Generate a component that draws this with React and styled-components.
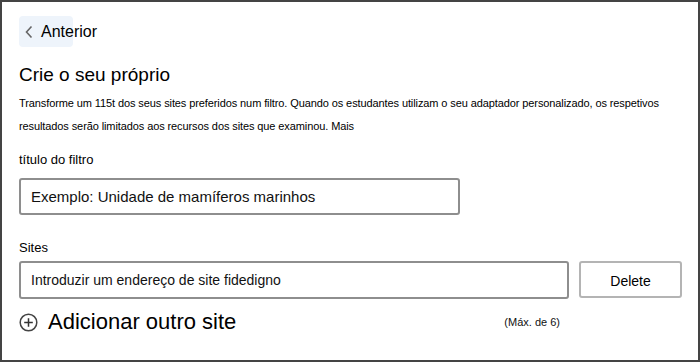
import React from 'react';
import styled, { createGlobalStyle } from 'styled-components';

const Global = createGlobalStyle`
  html, body {
    margin: 0;
    padding: 0;
    background: #fff;
  }
  * {
    box-sizing: border-box;
  }
`;

const Frame = styled.div`
  width: 700px;
  height: 362px;
  border: 2px solid #444;
  padding: 14px 0 0 17px;
  font-family: "Liberation Sans", Arial, sans-serif;
  color: #000;
  overflow: hidden;
`;

const BackButton = styled.button`
  display: flex;
  align-items: center;
  gap: 7px;
  width: 54px;
  height: 31px;
  padding: 0 0 0 5px;
  border: none;
  border-radius: 4px;
  background: #eef4fb;
  font-family: inherit;
  font-size: 16px;
  color: #000;
  white-space: nowrap;
  overflow: visible;
  cursor: pointer;

  svg {
    flex-shrink: 0;
  }
`;

const Heading = styled.h2`
  margin: 16px 0 0 0;
  font-size: 19px;
  font-weight: 400;
  line-height: 24px;
`;

const Description = styled.p`
  margin: 5px 0 0 0;
  font-family: "Liberation Sans Narrow", "Arial Narrow", "Liberation Sans", sans-serif;
  font-size: 11px;
  line-height: 23px;
  letter-spacing: -0.1px;
  width: 665px;
`;

const Label = styled.div`
  margin-top: ${p => p.$top}px;
  font-size: 13px;
  line-height: 16px;
`;

const Row = styled.div`
  display: flex;
  gap: 10px;
  margin-top: ${p => p.$top}px;
`;

const TextBox = styled.div`
  flex-shrink: 0;
  width: ${p => p.$width}px;
  height: ${p => p.$height}px;
  border: 2px solid #8e8e8e;
  border-radius: 3px;
  display: flex;
  align-items: center;
  padding-left: ${p => p.$pad}px;
  font-size: ${p => p.$size}px;
  color: #111;
`;

const DeleteButton = styled.button`
  flex-shrink: 0;
  width: 103px;
  height: 37px;
  border: 2px solid #b4b4b4;
  border-radius: 3px;
  background: #fff;
  font-family: inherit;
  font-size: 14px;
  color: #000;
  padding-top: 4px;
`;

const AddRow = styled.div`
  display: flex;
  align-items: center;
  margin-top: 10px;
  width: 541px;
`;

const AddText = styled.span`
  margin-left: 10px;
  font-size: 22px;
  line-height: 26px;
  flex: 1;
`;

const MaxNote = styled.span`
  font-size: 11px;
  color: #111;
`;

const PlusIcon = () => (
  <svg width="19" height="19" viewBox="0 0 19 19">
    <circle cx="9.5" cy="9.5" r="8.3" fill="none" stroke="#444" strokeWidth="1.5" />
    <path d="M9.5 5.2v8.6M5.2 9.5h8.6" stroke="#333" strokeWidth="1.5" />
  </svg>
);

const Chevron = () => (
  <svg width="10" height="14" viewBox="0 0 10 14">
    <path d="M7.5 1.5L2.5 7l5 5.5" fill="none" stroke="#666" strokeWidth="1.6" />
  </svg>
);

const App = () => (
  <>
    <Global />
    <Frame>
      <BackButton>
        <Chevron />
        Anterior
      </BackButton>
      <Heading>Crie o seu próprio</Heading>
      <Description>
        Transforme um 115t dos seus sites preferidos num filtro. Quando os estudantes utilizam o seu adaptador
        personalizado, os respetivos resultados serão limitados aos recursos dos sites que examinou. Mais
      </Description>
      <Label $top={14}>título do filtro</Label>
      <Row $top={10}>
        <TextBox $width={441} $height={37} $pad={10} $size={15}>
          Exemplo: Unidade de mamíferos marinhos
        </TextBox>
      </Row>
      <Label $top={25}>Sites</Label>
      <Row $top={5}>
        <TextBox $width={550} $height={38} $pad={10} $size={14}>
          Introduzir um endereço de site fidedigno
        </TextBox>
        <DeleteButton>Delete</DeleteButton>
      </Row>
      <AddRow>
        <PlusIcon />
        <AddText>Adicionar outro site</AddText>
        <MaxNote>(Máx. de 6)</MaxNote>
      </AddRow>
    </Frame>
  </>
);

export default App;
